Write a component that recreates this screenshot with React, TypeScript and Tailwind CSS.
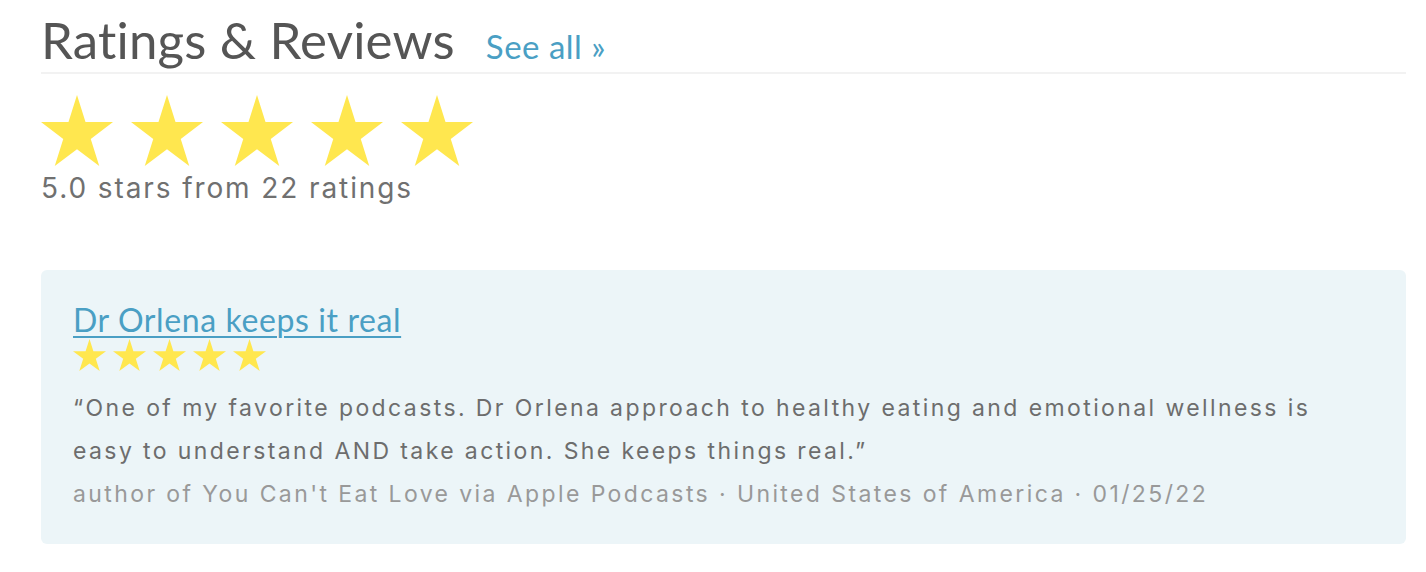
import React from 'react';

const STAR_POINTS =
  '50,0 61.23,34.55 97.55,34.55 68.16,55.9 79.39,90.45 50,69.1 20.61,90.45 31.84,55.9 2.45,34.55 38.77,34.55';

function Star({ className }: { className?: string }) {
  return (
    <svg viewBox="2.45 0 95.1 90.45" preserveAspectRatio="none" className={className} aria-hidden="true">
      <polygon points={STAR_POINTS} fill="#ffe74f" />
    </svg>
  );
}

function StarRow({ size, gap }: { size: string; gap: string }) {
  return (
    <div className={`flex ${gap}`}>
      {[0, 1, 2, 3, 4].map((i) => (
        <Star key={i} className={size} />
      ))}
    </div>
  );
}

export default function App() {
  const heading = { fontFamily: 'Lato, "Noto Sans", sans-serif' };
  const body = { fontFamily: 'Inter, "Liberation Sans", sans-serif' };

  return (
    <div className="w-[1426px] h-[572px] bg-white pl-[41px] pr-[20px] pt-[14px]">
      {/* Header */}
      <div className="flex items-baseline gap-[31px] border-b-2 border-[#f2f2f2]" style={heading}>
        <h2 className="text-[51px] leading-[51px] text-[#555555] tracking-[0.2px]">Ratings &amp; Reviews</h2>
        <a href="#" className="text-[33px] text-[#4a9fc4] tracking-[0.5px]">
          See all »
        </a>
      </div>

      {/* Overall rating */}
      <div className="mt-[21px]">
        <StarRow size="w-[72px] h-[71px]" gap="gap-[18px]" />
        <p className="text-[28px] leading-[34px] text-[#707070] tracking-[1.9px] mt-[5px]" style={body}>
          5.0 stars from 22 ratings
        </p>
      </div>

      {/* Review card */}
      <div className="mt-[65px] bg-[#ecf5f8] rounded-[6px] pl-[32px] pr-[80px] pt-[30px] pb-[28px]">
        <a
          href="#"
          className="text-[32px] leading-[40px] text-[#4a9fc4] tracking-[0.6px] underline underline-offset-[4px] decoration-2"
          style={heading}
        >
          Dr Orlena keeps it real
        </a>
        <div className="-mt-[1px]">
          <StarRow size="w-[33px] h-[32px]" gap="gap-[7px]" />
        </div>
        <div style={body} className="mt-[16px] tracking-[2.4px]">
          <p className="text-[23px] leading-[43px] text-[#6d6d6d]">
            “One of my favorite podcasts. Dr Orlena approach to healthy eating and emotional wellness is easy to
            understand AND take action. She keeps things real.”
          </p>
          <p className="text-[23px] leading-[43px] text-[#999999]">
            author of You Can't Eat Love via Apple Podcasts · United States of America · 01/25/22
          </p>
        </div>
      </div>
    </div>
  );
}
